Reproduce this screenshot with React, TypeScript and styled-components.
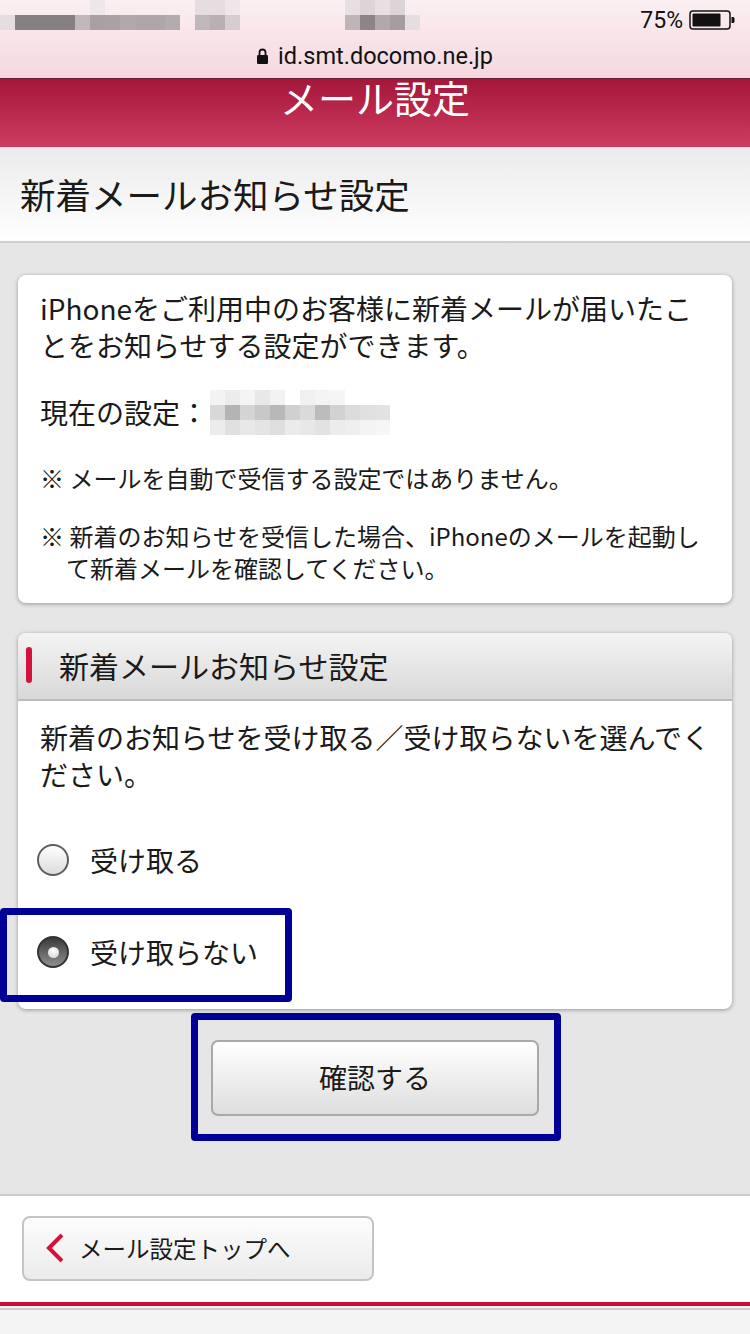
import styled, { createGlobalStyle } from 'styled-components'

const GlobalStyle = createGlobalStyle`
	html, body {
		margin: 0;
		padding: 0;
		background: #f4f4f4;
	}
	body {
		font-family: 'Noto Sans CJK JP', 'Noto Sans', sans-serif;
		color: #1a1a1a;
	}
	p {
		margin: 0;
	}
`

const Page = styled.div`
	position: relative;
	width: 750px;
	min-height: 1334px;
	background: #f4f4f4;
	overflow: hidden;
`

const Chrome = styled.div`
	height: 78px;
	background: linear-gradient(#fbeff2, #f5d8e0);
	border-bottom: 1px solid #6e1f31;
	display: flex;
	flex-direction: column;
`

const StatusRow = styled.div`
	height: 40px;
	display: flex;
	align-items: flex-start;
	justify-content: space-between;
`

const StatusRight = styled.div`
	display: flex;
	align-items: center;
	gap: 6px;
	height: 40px;
	padding-right: 15px;
	font-family: Roboto, 'Liberation Sans', sans-serif;
	font-size: 23px;
	color: #111;
`

const UrlRow = styled.div`
	flex: 1;
	display: flex;
	align-items: center;
	justify-content: center;
	gap: 10px;
	padding-bottom: 6px;
	font-family: Roboto, 'Liberation Sans', sans-serif;
	font-size: 23.5px;
	color: #111;
`

const RedHeader = styled.header`
	height: 68px;
	background: linear-gradient(#a5163b, #cd3d60);
	display: flex;
	justify-content: center;
	align-items: flex-start;
`

const RedTitle = styled.h1`
	margin: 0;
	font-size: 38px;
	line-height: 36px;
	font-weight: 400;
	color: #fff;
`

const TitleBar = styled.div`
	height: 96px;
	display: flex;
	align-items: center;
	padding: 0 20px 2px;
	box-sizing: border-box;
	background: linear-gradient(#ebebeb, #ffffff);
	border-bottom: 2px solid #cfcfcf;
`

const PageTitle = styled.h2`
	margin: 0;
	font-size: 35.5px;
	font-weight: 400;
	color: #1a1a1a;
`

const Main = styled.main`
	background: #e6e6e6;
	padding: 32px 18px 78px;
	border-bottom: 2px solid #cccccc;
	display: flex;
	flex-direction: column;
`

const Card = styled.section<{ $gap?: number }>`
	margin-top: ${(p) => p.$gap ?? 0}px;
	background: #fff;
	border-radius: 8px;
	box-shadow: 0 1px 4px rgba(0, 0, 0, 0.35);
	overflow: hidden;
`

const InfoBody = styled.div`
	padding: 15px 16px 19px 22px;
	display: flex;
	flex-direction: column;
`

const Lead = styled.p`
	font-size: 28px;
	line-height: 37px;
`

const Note = styled.p<{ $top: number }>`
	font-size: 24px;
	line-height: 32px;
	margin-top: ${(p) => p.$top}px;
	padding-left: 26px;
	text-indent: -26px;
`

const Current = styled.div`
	display: flex;
	align-items: center;
	gap: 2px;
	margin-top: 26px;
	font-size: 28px;
	line-height: 37px;
`

const CardHead = styled.div`
	height: 68px;
	display: flex;
	align-items: center;
	gap: 27px;
	padding: 0 0 3px 8px;
	box-sizing: border-box;
	background: linear-gradient(#f4f4f4, #d8d8d8);
	border-bottom: 2px solid #bcbcbc;
`

const RedMark = styled.span`
	width: 6px;
	height: 36px;
	border-radius: 3px;
	background: #d4123d;
`

const CardTitle = styled.h3`
	margin: 0;
	font-size: 30px;
	font-weight: 400;
	color: #1a1a1a;
`

const ChoiceBody = styled.div`
	padding: 18px 16px 11px 22px;
`

const Options = styled.div`
	margin-top: 21px;
`

const Option = styled.label`
	height: 92px;
	display: flex;
	align-items: center;
	gap: 21px;
	font-size: 28px;
	color: #1a1a1a;
`

const Radio = styled.span<{ $checked?: boolean }>`
	position: relative;
	width: 28px;
	height: 28px;
	margin-left: -3px;
	border-radius: 50%;
	border: 2px solid ${(p) => (p.$checked ? '#333' : '#5e5e5e')};
	background: ${(p) =>
		p.$checked
			? 'linear-gradient(#3a3a3a, #8e8e8e)'
			: 'linear-gradient(#ffffff, #dcdcdc)'};
	display: flex;
	align-items: center;
	justify-content: center;

	&::after {
		content: '';
		display: ${(p) => (p.$checked ? 'block' : 'none')};
		width: 11px;
		height: 11px;
		border-radius: 50%;
		background: radial-gradient(circle at 50% 35%, #ffffff, #cfcfcf);
	}
`

const ButtonRow = styled.div`
	display: flex;
	justify-content: center;
	margin-top: 31px;
`

const ConfirmButton = styled.button`
	width: 328px;
	height: 76px;
	border-radius: 7px;
	border: 2px solid #a9a9a9;
	background: linear-gradient(#ffffff, #dedede);
	font-family: inherit;
	font-size: 28px;
	color: #1a1a1a;
	padding: 0 0 3px;
`

const Footer = styled.footer`
	background: #fff;
	padding: 20px 22px 21px;
	border-bottom: 4px solid #d20a3c;
`

const BackButton = styled.button`
	width: 352px;
	height: 65px;
	border-radius: 8px;
	border: 2px solid #c4c4c4;
	background: linear-gradient(#fdfdfd, #ebebeb);
	display: flex;
	align-items: center;
	gap: 14px;
	padding: 0 0 2px 21px;
	font-family: inherit;
	font-size: 23.5px;
	color: #1a1a1a;
`

const BottomRule = styled.div`
	height: 2px;
	margin-top: 2px;
	background: #cccccc;
`

const Highlight = styled.div<{ $x: number; $y: number; $w: number; $h: number }>`
	position: absolute;
	left: ${(p) => p.$x}px;
	top: ${(p) => p.$y}px;
	width: ${(p) => p.$w}px;
	height: ${(p) => p.$h}px;
	box-sizing: border-box;
	border: 7px solid #000096;
	border-radius: 4px;
	pointer-events: none;
`

type Block = [number, number, string]

const carrierBlocks: Block[] = [
	[0, 15, '#e6dde0'], [15, 15, '#858081'], [30, 15, '#858081'], [45, 15, '#858081'], [60, 15, '#858081'],
	[75, 15, '#c0b8bb'], [90, 15, '#a8a0a3'], [105, 15, '#a9a1a4'], [120, 15, '#b0a8ab'], [135, 15, '#aea6a9'],
	[150, 15, '#aea6a9'], [165, 15, '#b3abae'], [90, 0, '#efe6e9'],
	[195, 0, '#e6dde0'], [210, 0, '#e6dde0'], [225, 0, '#efe6e9'],
	[195, 15, '#bfb7ba'], [210, 15, '#b8b0b3'], [225, 15, '#d6cdd0'],
	[345, 0, '#e8dfe2'], [360, 0, '#ddd4d7'], [375, 0, '#e8dfe2'], [390, 0, '#ddd4d7'],
	[345, 15, '#bdb5b8'], [360, 15, '#8c8486'], [375, 15, '#b0a8ab'], [390, 15, '#a49c9f'], [405, 15, '#e6dde0'],
]

const settingBlocks: Block[] = [
	[0, 0, '#f3f3f3'], [15, 0, '#ececec'], [30, 0, '#f4f4f4'], [45, 0, '#e8e8e8'], [60, 0, '#f2f2f2'],
	[90, 0, '#f0f0f0'], [105, 0, '#f4f4f4'], [120, 0, '#f5f5f5'],
	[0, 15, '#d8d8d8'], [15, 15, '#b4b4b4'], [30, 15, '#d4d4d4'], [45, 15, '#c8c8c8'], [60, 15, '#b8b8b8'],
	[75, 15, '#d0d0d0'], [90, 15, '#dadada'], [105, 15, '#bcbcbc'], [120, 15, '#d2d2d2'], [135, 15, '#dcdcdc'],
	[150, 15, '#e0e0e0'], [165, 15, '#e2e2e2'],
	[0, 30, '#ececec'], [15, 30, '#e0e0e0'], [30, 30, '#e8e8e8'], [45, 30, '#e4e4e4'], [60, 30, '#dedede'],
	[75, 30, '#ebebeb'], [90, 30, '#e8e8e8'], [105, 30, '#e2e2e2'], [120, 30, '#ececec'], [135, 30, '#efefef'],
	[150, 30, '#f4f4f4'], [165, 30, '#f6f6f6'],
]

const Mosaic = ({ blocks, w, h }: { blocks: Block[]; w: number; h: number }) => (
	<svg width={w} height={h} viewBox={`0 0 ${w} ${h}`}>
		{blocks.map(([x, y, c], i) => (
			<rect key={i} x={x} y={y} width={15} height={15} fill={c} />
		))}
	</svg>
)

const Battery = () => (
	<svg width="46" height="20" viewBox="0 0 46 20">
		<rect x="1" y="1" width="40" height="18" rx="3" fill="none" stroke="#111" strokeWidth="1.5" />
		<rect x="3.5" y="3.5" width="28" height="13" rx="1" fill="#111" />
		<path d="M42.5 7 h1.5 a1.5 1.5 0 0 1 1.5 1.5 v3 a1.5 1.5 0 0 1 -1.5 1.5 h-1.5 z" fill="#111" />
	</svg>
)

const Lock = () => (
	<svg width="11" height="16" viewBox="0 0 11 16">
		<path d="M2.5 7 V4.5 a3 3 0 0 1 6 0 V7" fill="none" stroke="#111" strokeWidth="1.8" />
		<rect x="0" y="7" width="11" height="9" rx="1.2" fill="#111" />
	</svg>
)

const Chevron = () => (
	<svg width="20" height="30" viewBox="0 0 20 30">
		<polyline points="17,2 4,15 17,28" fill="none" stroke="#d4123d" strokeWidth="4" strokeLinejoin="miter" />
	</svg>
)

export default function App() {
	return (
		<Page>
			<GlobalStyle />
			<Chrome>
				<StatusRow>
					<Mosaic blocks={carrierBlocks} w={420} h={30} />
					<StatusRight>
						<span>75%</span>
						<Battery />
					</StatusRight>
				</StatusRow>
				<UrlRow>
					<Lock />
					<span>id.smt.docomo.ne.jp</span>
				</UrlRow>
			</Chrome>

			<RedHeader>
				<RedTitle>メール設定</RedTitle>
			</RedHeader>

			<TitleBar>
				<PageTitle>新着メールお知らせ設定</PageTitle>
			</TitleBar>

			<Main>
				<Card>
					<InfoBody>
						<Lead>iPhoneをご利用中のお客様に新着メールが届いたことをお知らせする設定ができます。</Lead>
						<Current>
							<span>現在の設定：</span>
							<Mosaic blocks={settingBlocks} w={180} h={45} />
						</Current>
						<Note $top={27}>※ メールを自動で受信する設定ではありません。</Note>
						<Note $top={26}>※ 新着のお知らせを受信した場合、iPhoneのメールを起動して新着メールを確認してください。</Note>
					</InfoBody>
				</Card>

				<Card $gap={30}>
					<CardHead>
						<RedMark />
						<CardTitle>新着メールお知らせ設定</CardTitle>
					</CardHead>
					<ChoiceBody>
						<Lead>新着のお知らせを受け取る／受け取らないを選んでください。</Lead>
						<Options>
							<Option>
								<Radio />
								受け取る
							</Option>
							<Option>
								<Radio $checked />
								受け取らない
							</Option>
						</Options>
					</ChoiceBody>
				</Card>

				<ButtonRow>
					<ConfirmButton>確認する</ConfirmButton>
				</ButtonRow>
			</Main>

			<Footer>
				<BackButton>
					<Chevron />
					メール設定トップへ
				</BackButton>
			</Footer>
			<BottomRule />

			<Highlight $x={0} $y={908} $w={292} $h={94} />
			<Highlight $x={191} $y={1013} $w={370} $h={128} />
		</Page>
	)
}
